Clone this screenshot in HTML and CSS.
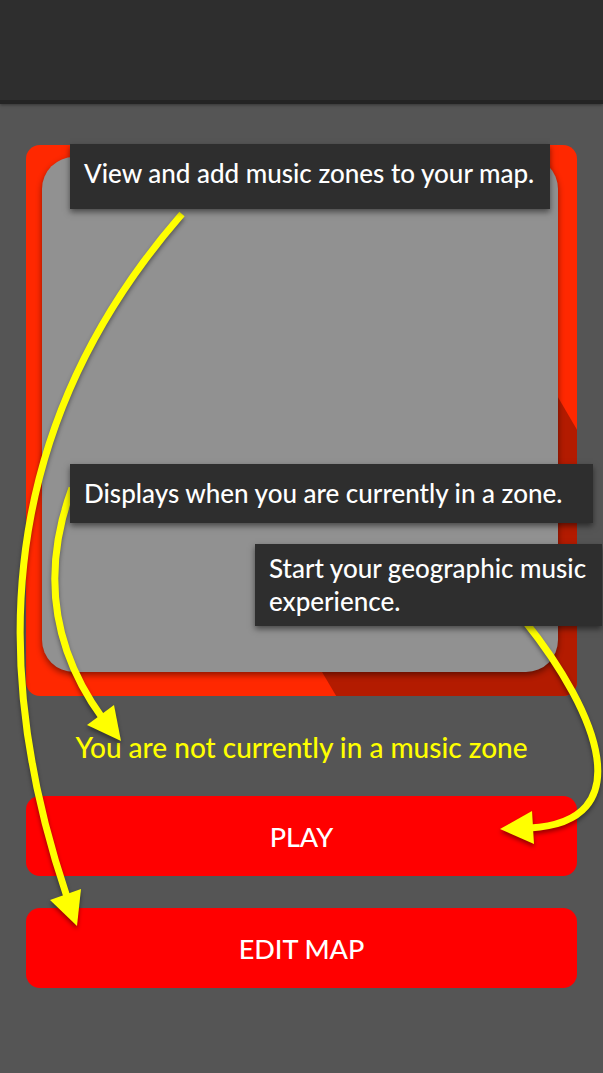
FILE: index.html
```html
<!DOCTYPE html>
<html lang="en">
<head>
<meta charset="utf-8">
<meta name="viewport" content="width=device-width, initial-scale=1">
<title>Music zones</title>
<link rel="stylesheet" href="styles.css">
</head>
<body>
<div class="screen">
  <header class="topbar"></header>
  <main class="content">
    <div class="map-frame">
      <div class="map"></div>
    </div>
    <p class="status">You are not currently in a music zone</p>
    <div class="actions">
      <button class="action" type="button">PLAY</button>
      <button class="action" type="button">EDIT MAP</button>
    </div>
  </main>
  <svg class="arrows" viewBox="0 0 603 1073" preserveAspectRatio="none" aria-hidden="true">
    <g fill="none" stroke="#ffff00" stroke-width="7">
      <path d="M182 214Q-67 500 67 897"/>
      <path d="M72 488Q26 613 103 719"/>
      <path d="M524 620C600 715 640 822 530 828"/>
    </g>
    <g fill="#ffff00">
      <path d="M77 926L50 900L81 889Z"/>
      <path d="M121 741L87 725L114 705Z"/>
      <path d="M500 829L532 811L534 844Z"/>
    </g>
  </svg>
  <p class="callout callout-map">View and add music zones to your map.</p>
  <p class="callout callout-status">Displays when you are currently in a zone.</p>
  <p class="callout callout-play">Start your geographic music experience.</p>
</div>
</body>
</html>
```
FILE: styles.css
```css
* {
  box-sizing: border-box;
}

body {
  margin: 0;
  background: #555555;
  color: #ffffff;
  font-family: Lato, "Liberation Sans", sans-serif;
  font-weight: 500;
}

.screen {
  position: relative;
  min-height: 100vh;
  overflow: hidden;
}

.topbar {
  height: 104px;
  background: #2e2e2e;
  border-bottom: 4px solid #242424;
  box-shadow: 0 1px 3px rgba(0, 0, 0, 0.4);
}

.content {
  padding: 41px 26px 85px;
}

.map-frame {
  position: relative;
  display: flex;
  aspect-ratio: 1;
  padding: 12px 19px 24px 16px;
  border-radius: 14px;
  background: #ff2800;
  overflow: hidden;
}

.map-frame::before {
  content: "";
  position: absolute;
  inset: 0;
  background: #b31b00;
  clip-path: polygon(96.5% 45.7%, 100% 51.7%, 100% 100%, 56.3% 100%, 53.7% 95.6%);
}

.map {
  position: relative;
  flex: 1;
  border-radius: 32px;
  background: #919191;
  box-shadow: 0 3px 6px rgba(0, 0, 0, 0.45);
}

.status {
  margin: 33px 0 31px;
  color: #ffff00;
  font-size: 28px;
  line-height: 36px;
  text-align: center;
  white-space: nowrap;
}

.actions {
  display: grid;
  gap: 32px;
}

.action {
  height: 80px;
  padding: 0;
  border: 0;
  border-radius: 14px;
  background: #ff0000;
  color: #ffffff;
  font: inherit;
  font-size: 27px;
}

.arrows {
  position: absolute;
  inset: 0;
  width: 100%;
  height: 100%;
  filter: drop-shadow(0 3px 2px rgba(0, 0, 0, 0.4));
  pointer-events: none;
}

.callout {
  position: absolute;
  margin: 0;
  padding: 13px 14px;
  background: #2e2e2e;
  box-shadow: 0 3px 6px rgba(0, 0, 0, 0.5);
  font-size: 26px;
  line-height: 33px;
}

.callout-map {
  top: 144px;
  left: 70px;
  right: 53px;
  height: 65px;
}

.callout-status {
  top: 464px;
  left: 70px;
  right: 10px;
  height: 59px;
}

.callout-play {
  top: 544px;
  left: 255px;
  right: 1px;
  padding: 8px 14px;
}
```
